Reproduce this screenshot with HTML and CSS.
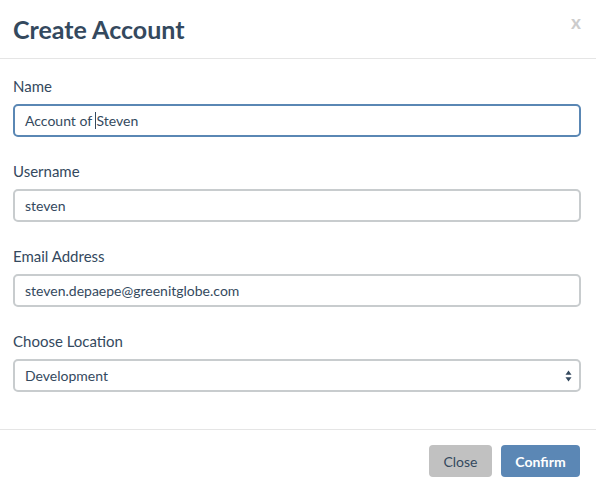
FILE: index.html
```html
<!DOCTYPE html>
<html>
<head>
<meta charset="utf-8">
<link rel="stylesheet" href="styles.css">
</head>
<body>
<div class="modal">
  <div class="modal-header">
    <h1 class="title">Create Account</h1>
    <span class="close-x">x</span>
  </div>
  <div class="modal-body">
    <div class="group">
      <label class="label">Name</label>
      <div class="field focused">Account of <span class="caret"></span>Steven</div>
    </div>
    <div class="group">
      <label class="label">Username</label>
      <div class="field">steven</div>
    </div>
    <div class="group">
      <label class="label">Email Address</label>
      <div class="field">steven.depaepe@greenitglobe.com</div>
    </div>
    <div class="group">
      <label class="label">Choose Location</label>
      <div class="field select">
        <span>Development</span>
        <svg class="arrows" width="7" height="12" viewBox="0 0 7 12"><path d="M3.5 0.5 L6.5 4.8 H0.5 Z" fill="#34495e"/><path d="M3.5 11.5 L6.5 7.2 H0.5 Z" fill="#34495e"/></svg>
      </div>
    </div>
  </div>
  <div class="modal-footer">
    <button class="btn btn-close">Close</button>
    <button class="btn btn-confirm">Confirm</button>
  </div>
</div>
</body>
</html>
```
FILE: styles.css
```css
html, body {
  margin: 0;
  padding: 0;
  background: #ffffff;
}
body {
  font-family: Lato, "Open Sans", sans-serif;
  color: #34495e;
}
.modal {
  width: 596px;
  height: 490px;
  background: #fff;
}
.modal-header {
  height: 58px;
  border-bottom: 1px solid #e5e5e5;
  display: flex;
  align-items: center;
  justify-content: space-between;
  padding: 0 15px 0 13px;
}
.title {
  margin: 0;
  font-size: 25px;
  font-weight: 700;
  color: #34495e;
  line-height: 30px;
}
.close-x {
  font-size: 19px;
  font-weight: 700;
  line-height: 20px;
  color: #cccccc;
  margin-bottom: 15px;
}
.modal-body {
  padding: 17px 15px 13px 13px;
}
.group {
  display: flex;
  flex-direction: column;
  margin-bottom: 24px;
}
.label {
  font-size: 15px;
  line-height: 20px;
  color: #34495e;
  margin-bottom: 8px;
}
.field {
  height: 33px;
  box-sizing: border-box;
  border: 2px solid #c8ccce;
  border-radius: 5px;
  padding: 0 10px;
  font-size: 14px;
  color: #34495e;
  display: flex;
  align-items: center;
  white-space: pre;
}
.field.focused {
  border-color: #5a87b4;
}
.caret {
  display: inline-block;
  width: 1px;
  height: 17px;
  background: #34495e;
}
.select {
  justify-content: space-between;
  padding-right: 7px;
}
.arrows {
  display: block;
}
.modal-footer {
  border-top: 1px solid #e5e5e5;
  padding: 15px 16px 0 13px;
  display: flex;
  justify-content: flex-end;
  gap: 9px;
}
.btn {
  height: 32px;
  border: none;
  border-radius: 4px;
  font-family: Lato, "Open Sans", sans-serif;
  font-size: 14px;
  padding: 0;
  cursor: pointer;
}
.btn-close {
  width: 63px;
  background: #c1c1c1;
  color: #34495e;
}
.btn-confirm {
  width: 79px;
  background: #5b87b5;
  color: #ffffff;
  font-weight: 700;
}
```
